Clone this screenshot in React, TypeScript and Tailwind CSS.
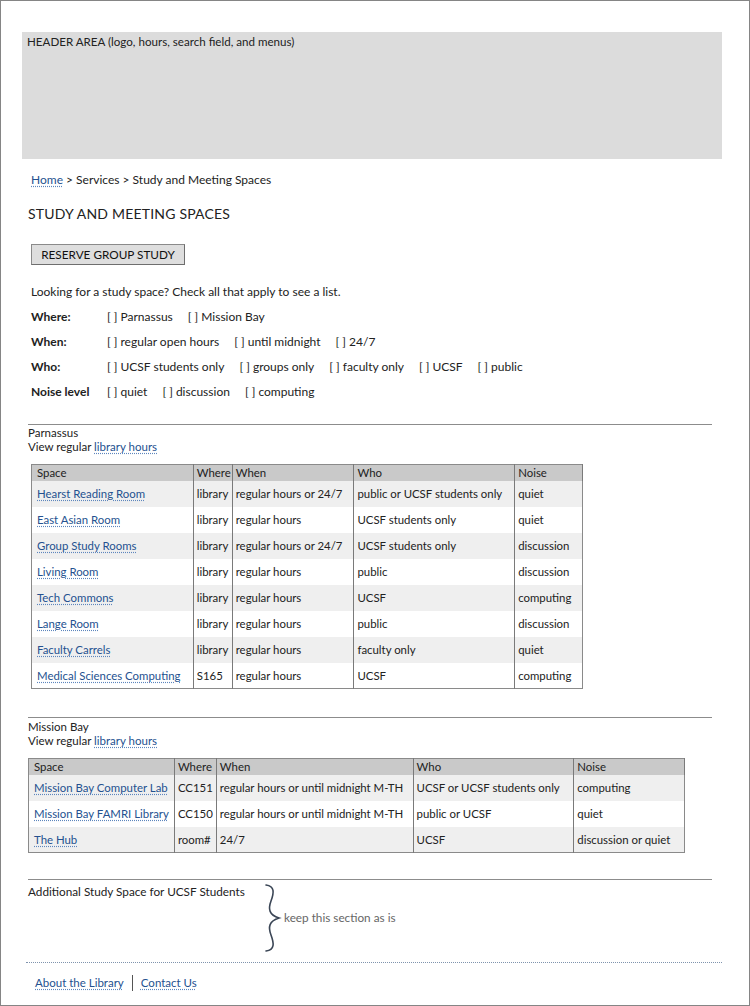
import React from "react";

type Row = { space: string; where: string; when: string; who: string; noise: string };

const parnassus: Row[] = [
  { space: "Hearst Reading Room", where: "library", when: "regular hours or 24/7", who: "public or UCSF students only", noise: "quiet" },
  { space: "East Asian Room", where: "library", when: "regular hours", who: "UCSF students only", noise: "quiet" },
  { space: "Group Study Rooms", where: "library", when: "regular hours or 24/7", who: "UCSF students only", noise: "discussion" },
  { space: "Living Room", where: "library", when: "regular hours", who: "public", noise: "discussion" },
  { space: "Tech Commons", where: "library", when: "regular hours", who: "UCSF", noise: "computing" },
  { space: "Lange Room", where: "library", when: "regular hours", who: "public", noise: "discussion" },
  { space: "Faculty Carrels", where: "library", when: "regular hours", who: "faculty only", noise: "quiet" },
  { space: "Medical Sciences Computing", where: "S165", when: "regular hours", who: "UCSF", noise: "computing" },
];

const missionBay: Row[] = [
  { space: "Mission Bay Computer Lab", where: "CC151", when: "regular hours or until midnight M-TH", who: "UCSF or UCSF students only", noise: "computing" },
  { space: "Mission Bay FAMRI Library", where: "CC150", when: "regular hours or until midnight M-TH", who: "public or UCSF", noise: "quiet" },
  { space: "The Hub", where: "room#", when: "24/7", who: "UCSF", noise: "discussion or quiet" },
];

const filters: { label: string; options: string[] }[] = [
  { label: "Where:", options: ["Parnassus", "Mission Bay"] },
  { label: "When:", options: ["regular open hours", "until midnight", "24/7"] },
  { label: "Who:", options: ["UCSF students only", "groups only", "faculty only", "UCSF", "public"] },
  { label: "Noise level", options: ["quiet", "discussion", "computing"] },
];

const linkCls = "text-[#24518f] underline decoration-dotted decoration-[#5d86bd] underline-offset-2";

function SpacesTable({ rows, widths }: { rows: Row[]; widths: number[] }) {
  const total = widths.reduce((a, b) => a + b, 0);
  return (
    <table className="border-collapse border border-[#8a8a8a] text-[11.4px] text-[#222]" style={{ width: total }}>
      <colgroup>
        {widths.map((w, i) => (
          <col key={i} style={{ width: w }} />
        ))}
      </colgroup>
      <thead>
        <tr className="h-[16px] bg-[#c9c9c9]">
          {["Space", "Where", "When", "Who", "Noise"].map((h, i) => (
            <th key={h} className={`text-left font-normal leading-none border-r border-[#7a7a7a] ${i === 0 ? "pl-[5px]" : "pl-[3px]"}`}>
              {h}
            </th>
          ))}
        </tr>
      </thead>
      <tbody>
        {rows.map((r, i) => (
          <tr key={r.space} className={`h-[26px] ${i % 2 === 0 ? "bg-[#efefef]" : "bg-white"}`}>
            <td className="pl-[5px] border-r border-[#7a7a7a] whitespace-nowrap">
              <a className={linkCls}>{r.space}</a>
            </td>
            <td className="pl-[3px] border-r border-[#7a7a7a] whitespace-nowrap">{r.where}</td>
            <td className="pl-[3px] border-r border-[#7a7a7a] whitespace-nowrap">{r.when}</td>
            <td className="pl-[3px] border-r border-[#7a7a7a] whitespace-nowrap">{r.who}</td>
            <td className="pl-[3px] whitespace-nowrap">{r.noise}</td>
          </tr>
        ))}
      </tbody>
    </table>
  );
}

function Campus({ name }: { name: string }) {
  return (
    <div className="text-[11.5px] leading-[14px] text-[#222]">
      <div>{name}</div>
      <div>
        View regular <a className={linkCls}>library hours</a>
      </div>
    </div>
  );
}

export default function App() {
  return (
    <div className="w-[750px] h-[1006px] border border-[#858585] bg-white text-[#222] font-['Lato',sans-serif] overflow-hidden">
      {/* header placeholder */}
      <div className="mt-[31px] ml-[21px] w-[700px] h-[127px] bg-[#dcdcdc] px-[5px] pt-[3px] text-[11.6px] leading-[14px]">
        HEADER AREA (logo, hours, search field, and menus)
      </div>

      <div className="pl-[27px]">
        <div className="mt-[14px] ml-[3px] h-[14px] text-[12px] leading-[14px]">
          <a className={linkCls}>Home</a> &gt; Services &gt; Study and Meeting Spaces
        </div>

        <h1 className="mt-[18px] h-[18px] text-[14px] leading-[18px] tracking-[0.2px]">STUDY AND MEETING SPACES</h1>

        <button className="mt-[21px] ml-[3px] block w-[154px] h-[21px] bg-[#dedede] border border-[#8a8a8a] border-b-[#6e6e6e] border-r-[#6e6e6e] text-[11.75px] leading-none text-[#111]">
          RESERVE GROUP STUDY
        </button>

        {/* filters */}
        <div className="mt-[14px] ml-[3px] text-[12px]">
          <div className="h-[25px] flex items-center">Looking for a study space? Check all that apply to see a list.</div>
          {filters.map((f) => (
            <div key={f.label} className="h-[25px] flex items-center">
              <span className="w-[76px] font-bold">{f.label}</span>
              <div className="flex items-center gap-[15px]">
                {f.options.map((o) => (
                  <span key={o} className="whitespace-nowrap">
                    [ ] {o}
                  </span>
                ))}
              </div>
            </div>
          ))}
        </div>

        <div className="mt-[20px] w-[684px] border-t border-[#8c8c8c]" />
        <div className="mt-[1px]">
          <Campus name="Parnassus" />
        </div>
        <div className="mt-[10px] ml-[3px]">
          <SpacesTable rows={parnassus} widths={[162, 39, 122, 161, 68]} />
        </div>

        <div className="mt-[28px] w-[684px] border-t border-[#8c8c8c]" />
        <div className="mt-[2px]">
          <Campus name="Mission Bay" />
        </div>
        <div className="mt-[10px]">
          <SpacesTable rows={missionBay} widths={[146, 42, 197, 161, 111]} />
        </div>

        <div className="mt-[26px] w-[684px] border-t border-[#8c8c8c]" />
        <div className="h-[82px] flex text-[11.75px]">
          <div className="w-[235px] pt-[5px] leading-[14px] whitespace-nowrap">Additional Study Space for UCSF Students</div>
          <div className="pt-[3px] flex items-center h-[72px]">
            <svg width="20" height="70" viewBox="0 0 20 70" fill="none" className="shrink-0">
              <path
                d="M3 2 C12 3 11 10 8 18 C5 26 6 32 16 35 C6 38 5 44 8 52 C11 60 12 67 3 68"
                stroke="#3b4656"
                strokeWidth="1.6"
                strokeLinecap="round"
              />
            </svg>
            <span className="text-[#666] ml-[1px]">keep this section as is</span>
          </div>
        </div>

        <div className="-ml-[2px] w-[696px] border-t border-dotted border-[#7f93ad]" />
        <div className="mt-[12px] ml-[7px] flex items-center text-[11.5px] leading-[14px]">
          <a className={linkCls}>About the Library</a>
          <span className="mx-[8px] w-px h-[16px] bg-[#555]" />
          <a className={linkCls}>Contact Us</a>
        </div>
      </div>
    </div>
  );
}
